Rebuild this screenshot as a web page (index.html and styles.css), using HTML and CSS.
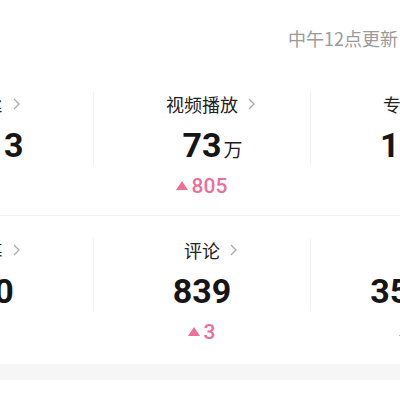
FILE: index.html
```html
<!DOCTYPE html>
<html lang="zh">
<head>
<meta charset="utf-8">
<link rel="stylesheet" href="styles.css">
</head>
<body>
<div class="page">
  <div class="header">中午12点更新</div>
  <div class="grid">
    <div class="row">
      <div class="cell">
        <div class="top">
          <div class="label"><span>粉丝</span><svg class="chev" viewBox="0 0 7 12"><polyline points="1,1 6,6 1,11"/></svg></div>
          <div class="num">1213</div>
        </div>
        <div class="delta"><svg class="tri" viewBox="0 0 12 9"><polygon points="6,0 12,9 0,9"/></svg>2</div>
      </div>
      <div class="cell">
        <div class="top line">
          <div class="label"><span>视频播放</span><svg class="chev" viewBox="0 0 7 12"><polyline points="1,1 6,6 1,11"/></svg></div>
          <div class="num">73<span class="unit">万</span></div>
        </div>
        <div class="delta"><svg class="tri" viewBox="0 0 12 9"><polygon points="6,0 12,9 0,9"/></svg>805</div>
      </div>
      <div class="cell">
        <div class="top line">
          <div class="label"><span>专栏阅读</span><svg class="chev" viewBox="0 0 7 12"><polyline points="1,1 6,6 1,11"/></svg></div>
          <div class="num">1024</div>
        </div>
        <div class="delta"><svg class="tri" viewBox="0 0 12 9"><polygon points="6,0 12,9 0,9"/></svg>5</div>
      </div>
    </div>
    <div class="row">
      <div class="cell">
        <div class="top">
          <div class="label"><span>弹幕</span><svg class="chev" viewBox="0 0 7 12"><polyline points="1,1 6,6 1,11"/></svg></div>
          <div class="num">120</div>
        </div>
        <div class="delta"><svg class="tri" viewBox="0 0 12 9"><polygon points="6,0 12,9 0,9"/></svg>1</div>
      </div>
      <div class="cell">
        <div class="top line">
          <div class="label"><span>评论</span><svg class="chev" viewBox="0 0 7 12"><polyline points="1,1 6,6 1,11"/></svg></div>
          <div class="num">839</div>
        </div>
        <div class="delta"><svg class="tri" viewBox="0 0 12 9"><polygon points="6,0 12,9 0,9"/></svg>3</div>
      </div>
      <div class="cell">
        <div class="top line">
          <div class="label"><span>点赞</span><svg class="chev" viewBox="0 0 7 12"><polyline points="1,1 6,6 1,11"/></svg></div>
          <div class="num">35612</div>
        </div>
        <div class="delta"><svg class="tri" viewBox="0 0 12 9"><polygon points="6,0 12,9 0,9"/></svg>12</div>
      </div>
    </div>
  </div>
  <div class="band"></div>
</div>
</body>
</html>
```

FILE: styles.css
```css
html, body {
  margin: 0;
  padding: 0;
  background: #ffffff;
}
body {
  width: 400px;
  height: 400px;
  overflow: hidden;
  font-family: "Noto Sans CJK SC", "Noto Sans", sans-serif;
}
.page {
  width: 400px;
}
.header {
  padding: 25px 0 19px 288px;
  height: 26px;
  line-height: 26px;
  font-size: 18px;
  color: #9a9a9a;
  white-space: nowrap;
}
.grid {
  width: 651px;
  margin-left: -124px;
}
.row {
  display: grid;
  grid-template-columns: 217px 217px 217px;
  padding: 22px 0 16px;
}
.row + .row {
  border-top: 1px solid #f1f1f1;
  padding-bottom: 19px;
}
.cell {
  display: flex;
  flex-direction: column;
  align-items: center;
}
.top {
  align-self: stretch;
  display: flex;
  flex-direction: column;
  align-items: center;
}
.top.line {
  border-left: 1px solid #f2f2f2;
}
.label {
  display: flex;
  align-items: center;
  height: 24px;
  line-height: 24px;
  font-size: 18px;
  color: #222222;
  white-space: nowrap;
}
.chev {
  width: 7px;
  height: 12px;
  margin-left: 10px;
  margin-right: -17px;
  fill: none;
  stroke: #ababab;
  stroke-width: 1.3;
}
.num {
  margin-top: 9px;
  height: 40px;
  line-height: 40px;
  font-family: Roboto, "Liberation Sans", sans-serif;
  font-weight: 700;
  font-size: 34px;
  color: #161616;
  white-space: nowrap;
}
.unit {
  display: inline-block;
  width: 19px;
  margin-left: 2px;
  margin-right: -21px;
  font-family: "Noto Sans CJK SC", sans-serif;
  font-weight: 400;
  font-size: 19px;
  color: #222222;
}
.delta {
  margin-top: 8px;
  display: flex;
  align-items: center;
  height: 26px;
  line-height: 26px;
  font-family: Roboto, "Liberation Sans", sans-serif;
  font-weight: 500;
  font-size: 21px;
  color: #ef6e98;
}
.tri {
  width: 12px;
  height: 9px;
  margin-right: 4px;
  margin-bottom: 2px;
  fill: #ef6e98;
}
.band {
  height: 16px;
  background: #f6f6f7;
}
```
